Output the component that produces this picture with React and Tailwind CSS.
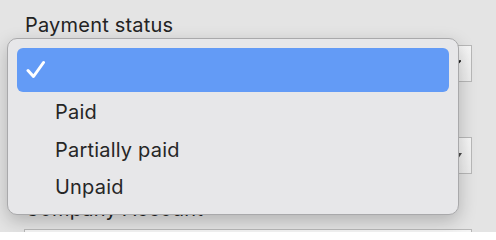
import React from "react";

const font = { fontFamily: "Inter, 'Liberation Sans', sans-serif" };

function Check() {
  return (
    <svg width="20" height="20" viewBox="0 0 20 20" className="shrink-0">
      <path
        d="M2 10.5 L7.5 16.5 L17.5 2.5"
        fill="none"
        stroke="white"
        strokeWidth="3"
        strokeLinecap="round"
        strokeLinejoin="round"
      />
    </svg>
  );
}

export default function App() {
  const options = ["Paid", "Partially paid", "Unpaid"];

  return (
    <div
      className="relative w-[496px] h-[232px] overflow-hidden bg-[#e4e4e4] text-[#232323]"
      style={font}
    >
      {/* form behind the popup */}
      <div className="flex flex-col gap-[23px] px-6 pt-[13px]">
        <div className="flex flex-col gap-2">
          <label className="text-[20px] leading-[24px] tracking-[0.2px] pl-px">Payment status</label>
          <div className="h-[37px] border border-[#b8b8b8] bg-gradient-to-b from-[#f6f6f6] to-[#ececec] flex items-center justify-end pr-[8px]">
            <svg width="10" height="10" viewBox="0 0 10 10">
              <path d="M1 8 L7 2" stroke="#1a1a1a" strokeWidth="2" strokeLinecap="round" />
            </svg>
          </div>
        </div>
        <div className="flex flex-col gap-2">
          <div className="h-[24px]" />
          <div className="h-[37px] border border-[#b8b8b8] bg-gradient-to-b from-[#f6f6f6] to-[#ececec] flex items-center justify-end pr-[9px]">
            <svg width="8" height="6" viewBox="0 0 8 6">
              <path d="M0 0 H8 L4 6 Z" fill="#4a4a4a" />
            </svg>
          </div>
        </div>
        <div className="flex flex-col gap-2">
          <label className="text-[20px] leading-[24px] tracking-[0.2px] pl-px">Company Account</label>
          <div className="h-[37px] border border-[#b8b8b8] bg-[#f4f4f4]" />
        </div>
      </div>

      {/* popup menu */}
      <div className="absolute left-[7px] top-[38px] w-[452px] h-[177px] rounded-[10px] bg-[#e7e7e9] border border-[#a9a9ab] shadow-[0_6px_18px_rgba(0,0,0,0.22)] px-[9px] pt-[9px]">
        <div className="h-[44px] rounded-[6px] bg-[#639bf6] flex items-center pl-[9px]">
          <Check />
        </div>
        {options.map((o, i) => (
          <div
            key={o}
            className={
              "flex items-center pl-[38px] text-[20px] tracking-[0.2px] text-[#262626] " +
              (i === 2 ? "h-[36px]" : i === 0 ? "h-[39px]" : "h-[38px]")
            }
          >
            {o}
          </div>
        ))}
      </div>
    </div>
  );
}
